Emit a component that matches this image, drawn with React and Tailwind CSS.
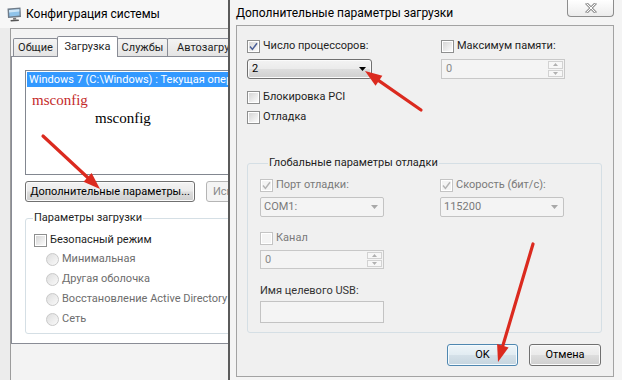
import React from "react";

const btnBg =
  "bg-[linear-gradient(180deg,#f3f3f3_0%,#ebebeb_48%,#dddddd_52%,#cfcfcf_100%)]";

function Check({ checked, disabled }) {
  return (
    <span
      className={`w-[13px] h-[13px] shrink-0 border ${
        disabled ? "border-[#c4c4c4]" : "border-[#8e8f8f]"
      } bg-white p-[1px] flex`}
    >
      <span
        className={`flex-1 flex items-center justify-center ${
          disabled ? "bg-[#f4f4f4]" : "bg-linear-to-br from-[#d6d6d6] to-[#fbfbfb]"
        }`}
      >
        {checked && (
          <svg width="9" height="9" viewBox="0 0 9 9">
            <path
              d="M1 4.6 L3.4 7.4 L8 1.2"
              fill="none"
              stroke={disabled ? "#b4b4b4" : "#4a5f97"}
              strokeWidth="1.5"
            />
          </svg>
        )}
      </span>
    </span>
  );
}

function CheckRow({ label, checked, disabled, className = "" }) {
  return (
    <div className={`flex items-center gap-[3px] h-[18px] whitespace-nowrap ${className}`}>
      <Check checked={checked} disabled={disabled} />
      <span className={disabled ? "text-[#7a7a7a]" : "text-[#1e1e1e]"}>{label}</span>
    </div>
  );
}

function Radio({ label }) {
  return (
    <div className="flex items-center gap-[3px] h-[20px] pl-[20px] whitespace-nowrap">
      <span className="w-[13px] h-[13px] shrink-0 rounded-full border border-[#c9c9c9] bg-linear-to-br from-[#dedede] to-[#fafafa]" />
      <span className="text-[#6d6d6d]">{label}</span>
    </div>
  );
}

function Arrow({ x1, y1, x2, y2 }) {
  const dx = x2 - x1;
  const dy = y2 - y1;
  const len = Math.sqrt(dx * dx + dy * dy);
  const ux = dx / len;
  const uy = dy / len;
  const hl = 17;
  const hw = 6;
  const bx = x2 - ux * hl;
  const by = y2 - uy * hl;
  const px = -uy;
  const py = ux;
  const pts = `${x2},${y2} ${bx + px * hw},${by + py * hw} ${bx - px * hw},${by - py * hw}`;
  return (
    <g>
      <line x1={x1} y1={y1} x2={bx + ux * 2} y2={by + uy * 2} stroke="#db2a1f" strokeWidth="3.2" strokeLinecap="round" />
      <polygon points={pts} fill="#db2a1f" />
    </g>
  );
}

function Combo({ value, disabled, className = "" }) {
  if (disabled) {
    return (
      <div
        className={`w-[124px] h-[20px] rounded-[2px] border border-[#c3c3c3] bg-[#f4f4f4] flex items-center justify-between pl-[3px] pr-[5px] text-[#7a7a7a] ${className}`}
      >
        <span>{value}</span>
        <svg width="7" height="4" viewBox="0 0 7 4">
          <path d="M0 0 H7 L3.5 4 Z" fill="#a8a8a8" />
        </svg>
      </div>
    );
  }
  return (
    <div
      className={`w-[125px] h-[20px] rounded-[3px] border border-[#707070] ${btnBg} shadow-[inset_0_0_0_1px_#fbfbfb] flex items-center justify-between pl-[4px] pr-[5px] text-black ${className}`}
    >
      <span>{value}</span>
      <svg width="7" height="4" viewBox="0 0 7 4">
        <path d="M0 0 H7 L3.5 4 Z" fill="#000" />
      </svg>
    </div>
  );
}

function Spin({ h = "h-[20px]", className = "" }) {
  return (
    <div
      className={`w-[124px] ${h} border border-[#c8c8c8] bg-[#f4f4f4] flex items-stretch text-[#8a8a8a] ${className}`}
    >
      <span className="flex-1 pl-[4px] flex items-center">0</span>
      <div className="flex flex-col w-[17px] p-[1px] gap-[1px]">
        <span className="flex-1 border border-[#d2d2d2] bg-[#f7f7f7] flex items-center justify-center">
          <svg width="5" height="3" viewBox="0 0 5 3">
            <path d="M0 3 H5 L2.5 0 Z" fill="#b0b0b0" />
          </svg>
        </span>
        <span className="flex-1 border border-[#d2d2d2] bg-[#f7f7f7] flex items-center justify-center">
          <svg width="5" height="3" viewBox="0 0 5 3">
            <path d="M0 0 H5 L2.5 3 Z" fill="#b0b0b0" />
          </svg>
        </span>
      </div>
    </div>
  );
}

function Tab({ children, selected, w }) {
  if (selected) {
    return (
      <div
        className={`${w} h-[21px] -mb-px -ml-px border border-b-0 border-[#898c95] bg-white flex items-center justify-center relative z-10 rounded-t-[2px]`}
      >
        {children}
      </div>
    );
  }
  return (
    <div
      className={`${w} h-[18px] -ml-px border border-b-0 border-[#898c95] bg-linear-to-b from-[#f4f4f4] to-[#e4e4e4] flex items-center justify-center whitespace-nowrap overflow-hidden rounded-t-[2px]`}
    >
      {children}
    </div>
  );
}

function MonitorIcon() {
  return (
    <svg width="17" height="16" viewBox="0 0 17 16">
      <path d="M1.5 2.5 L14.5 1.5 L15 11 L2 12 Z" fill="#6f7c8a" />
      <path d="M3 4 L13.3 3.2 L13.6 9.6 L3.4 10.4 Z" fill="#8fc3ea" />
      <path d="M3 4 L13.3 3.2 L13.4 5.4 L3.1 6.4 Z" fill="#cfe6f7" />
      <path d="M7 12 L10 11.8 L10.4 13.6 L7.2 13.8 Z" fill="#7a7a7a" />
      <path d="M4.5 14 L12.5 13.4 L13 15 L4.8 15.4 Z" fill="#555" />
    </svg>
  );
}

export default function App() {
  return (
    <div className="relative w-[622px] h-[380px] overflow-hidden flex bg-[#f0f0f0] text-[11px] leading-[16px] text-[#1e1e1e] font-['Roboto',sans-serif]">
      {/* Background window: System Configuration */}
      <div className="w-[228px] shrink-0 h-full flex flex-col overflow-hidden bg-[#ececec]">
        <div className="h-[28px] shrink-0 flex items-center pl-[6px] gap-[3px] bg-[#f7f7f7]">
          <MonitorIcon />
          <span className="text-[12px] text-black whitespace-nowrap">Конфигурация системы</span>
        </div>
        <div className="flex-1 pl-[10px]">
          <div className="w-[330px] h-full border-l border-t border-[#9c9c9c] bg-[#f3f3f3] pt-[7px]">
            <div className="flex items-end h-[20px] pl-[3px]">
              <Tab w="w-[45px]">Общие</Tab>
              <Tab selected w="w-[61px]">Загрузка</Tab>
              <Tab w="w-[51px]">Службы</Tab>
              <Tab w="w-[90px]">Автозагрузка</Tab>
            </div>
            <div className="h-[288px] border border-[#898c95] bg-white pl-[13px] pt-[13px]">
              <div className="w-[300px] h-[105px] border border-[#828790] p-[1px] overflow-hidden bg-white">
                <div className="h-[15px] bg-[#3399ff] text-white text-[11px] leading-[15px] pl-[2px] whitespace-nowrap">
                  {"Windows 7 (C:\\Windows) : Текущая операционная система"}
                </div>
                <div className="mt-[4px] pl-[5px] h-[18px] leading-[18px] text-[15px] text-[#c42a2a] font-['Liberation_Serif',serif]">
                  msconfig
                </div>
                <div className="pl-[68px] h-[18px] leading-[18px] text-[15px] text-black font-['Liberation_Serif',serif]">
                  msconfig
                </div>
              </div>
              <div className="flex gap-[11px] mt-[6px]">
                <div
                  className={`w-[170px] h-[21px] shrink-0 rounded-[3px] border border-[#707070] ${btnBg} shadow-[inset_0_0_0_1px_#fbfbfb] flex items-center justify-center text-black whitespace-nowrap`}
                >
                  Дополнительные параметры...
                </div>
                <div className="w-[160px] h-[21px] shrink-0 rounded-[3px] border border-[#b5b5b5] bg-[#f4f4f4] flex items-center pl-[6px] text-[#8a8a8a] whitespace-nowrap overflow-hidden">
                  Использовать по умолчанию
                </div>
              </div>
              <fieldset className="mt-[8px] w-[300px] h-[124px] border border-[#d5dfe5] rounded-[3px]">
                <legend className="ml-[7px] px-[1px] leading-[16px] text-[#1e1e1e]">Параметры загрузки</legend>
                <div className="pl-[8px] mt-[5px]">
                  <CheckRow label="Безопасный режим" />
                </div>
                <Radio label="Минимальная" />
                <Radio label="Другая оболочка" />
                <Radio label="Восстановление Active Directory" />
                <Radio label="Сеть" />
              </fieldset>
            </div>
          </div>
        </div>
      </div>

      {/* Front dialog: Advanced boot options */}
      <div className="flex-1 h-full flex flex-col border-l-2 border-[#5b5b5b] bg-[#f4f4f4]">
        <div className="h-[25px] shrink-0 flex items-start">
          <span className="pl-[6px] h-[25px] flex items-center text-[12px] text-black whitespace-nowrap">
            Дополнительные параметры загрузки
          </span>
          <div className="ml-auto mr-[8px] w-[47px] h-[17px] border border-t-0 border-[#8d8d8d] rounded-b-[4px] bg-linear-to-b from-[#ffffff] to-[#ececec] flex items-center justify-center">
            <svg width="12" height="10" viewBox="0 0 12 10">
              <path d="M2 1 L10 9 M10 1 L2 9" stroke="#9a9a9a" strokeWidth="3" strokeLinecap="square" />
              <path d="M2 1 L10 9 M10 1 L2 9" stroke="#ffffff" strokeWidth="1" strokeLinecap="square" />
            </svg>
          </div>
        </div>
        <div className="flex-1 ml-[6px] mr-[8px] mb-[3px] border border-[#a3a3a3] bg-[#f0f0f0] flex flex-col">
          <div className="grid grid-cols-[194px_1fr] pl-[10px] pt-[11px]">
            <div>
              <CheckRow label="Число процессоров:" checked />
              <Combo value="2" className="mt-[4px]" />
              <CheckRow label="Блокировка PCI" className="mt-[9px]" />
              <CheckRow label="Отладка" className="mt-[2px]" />
            </div>
            <div>
              <CheckRow label="Максимум памяти:" />
              <Spin className="mt-[4px]" />
            </div>
          </div>

          <fieldset className="mt-[29px] ml-[10px] w-[355px] border border-[#d5dfe5] rounded-[3px] pl-[12px] pb-[9px]">
            <legend className="ml-[8px] px-[1px] leading-[16px] text-[#1e1e1e]">Глобальные параметры отладки</legend>
            <div className="flex">
              <div className="w-[180px]">
                <CheckRow label="Порт отладки:" checked disabled className="mt-[5px]" />
                <Combo value="COM1:" disabled className="mt-[3px]" />
              </div>
              <div>
                <CheckRow label="Скорость (бит/с):" checked disabled className="mt-[5px]" />
                <Combo value="115200" disabled className="mt-[3px]" />
              </div>
            </div>
            <CheckRow label="Канал" disabled className="mt-[12px]" />
            <Spin h="h-[19px]" className="mt-[3px]" />
            <div className="mt-[13px] h-[18px] leading-[18px] text-[#333]">Имя целевого USB:</div>
            <div className="mt-[1px] w-[124px] h-[22px] border border-[#c3c3c3] bg-[#f4f4f4]" />
          </fieldset>

          <div className="flex justify-end gap-[11px] pr-[12px] mt-[11px]">
            <div className="w-[71px] h-[22px] rounded-[3px] border border-[#4f87b0] bg-[linear-gradient(180deg,#eef5f9_0%,#e2ecf2_48%,#d4e0e8_52%,#c6d5df_100%)] shadow-[inset_0_0_0_1px_#f4fbff] flex items-center justify-center text-black">
              OK
            </div>
            <div
              className={`w-[72px] h-[22px] rounded-[3px] border border-[#707070] ${btnBg} shadow-[inset_0_0_0_1px_#fbfbfb] flex items-center justify-center text-black`}
            >
              Отмена
            </div>
          </div>
        </div>
      </div>

      <svg className="absolute inset-0 pointer-events-none" width="622" height="380" viewBox="0 0 622 380">
        <Arrow x1={43} y1={136} x2={100} y2={189} />
        <Arrow x1={421} y1={110} x2={365} y2={71} />
        <Arrow x1={533} y1={244} x2={498} y2={362} />
      </svg>
    </div>
  );
}
